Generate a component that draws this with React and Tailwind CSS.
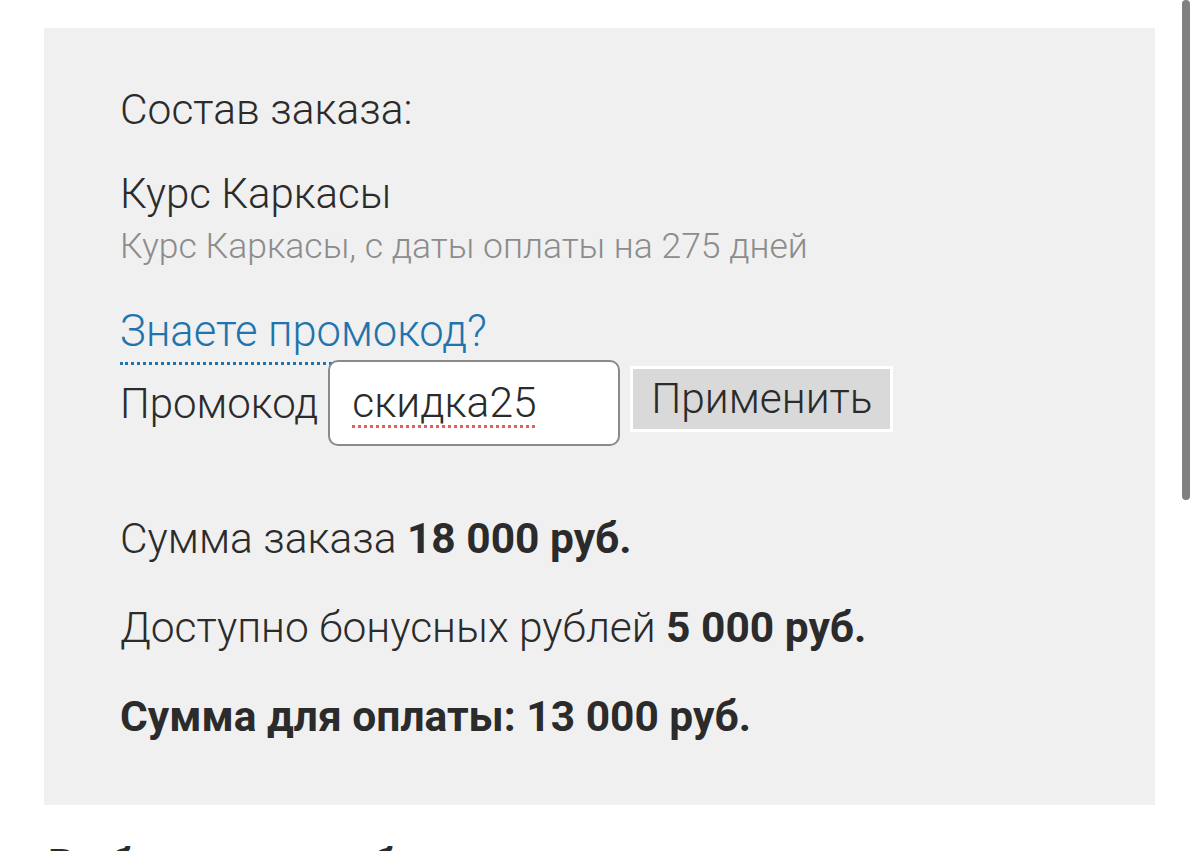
export default function App() {
  return (
    <div
      className="relative h-[851px] w-[1200px] overflow-hidden bg-white text-[#2b2b2b]"
      style={{ fontFamily: "Roboto, 'Noto Sans', sans-serif" }}
    >
      <div className="ml-[44px] mt-[28px] h-[777px] w-[1111px] bg-[#f0f0f0] pl-[76px] pt-[55px] font-light">
        <div className="text-[42.5px] leading-[53px]">Состав заказа:</div>

        <div className="mt-[31px] text-[42px] leading-[53px]">Курс Каркасы</div>
        <div className="mt-[4px] text-[35.5px] leading-[44px] text-[#8c8c8c]">
          Курс Каркасы, с даты оплаты на 275 дней
        </div>

        <div className="mt-[37px]">
          <span className="border-b-[3px] border-dotted border-[#1f74ad] pb-[5px] text-[43.5px] leading-[53px] text-[#1f74ad]">
            Знаете промокод?
          </span>
        </div>

        <div className="mt-[2px] flex items-center">
          <span className="mr-[10px] text-[42px] leading-[53px]">Промокод</span>
          <div className="relative flex h-[86px] w-[292px] items-center rounded-[10px] border-2 border-[#8a8a8a] bg-white pl-[22px]">
            <span className="text-[42.5px] leading-[50px] underline decoration-[#e06060] decoration-dotted decoration-[3px] underline-offset-[8px]">
              скидка25
            </span>
          </div>
          <button className="ml-[10px] mt-[-9px] h-[66px] w-[263px] border-[3px] border-white bg-[#d9d9d9] text-[42.5px] font-light leading-[50px] text-[#2b2b2b]">
            Применить
          </button>
        </div>

        <div className="mt-[66px] flex flex-col gap-[36px] text-[42.5px] leading-[53px]">
          <div>
            Сумма заказа <b className="font-bold">18 000 руб.</b>
          </div>
          <div>
            Доступно бонусных рублей <b className="font-bold">5 000 руб.</b>
          </div>
          <div className="font-bold">Сумма для оплаты: 13 000 руб.</div>
        </div>
      </div>

      <div className="ml-[48px] mt-[35px] text-[42px] font-bold leading-[50px]">
        Выберите способ оплаты
      </div>

      <div className="absolute right-[10px] top-0 h-[500px] w-[8px] rounded-full bg-[#808080]" />
    </div>
  );
}
